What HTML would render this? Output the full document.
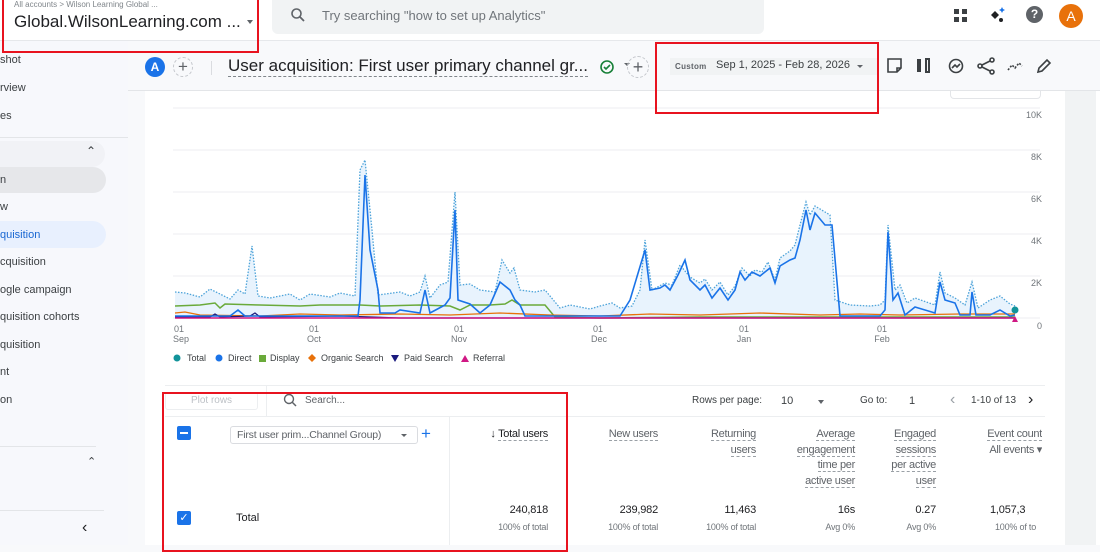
<!DOCTYPE html>
<html><head><meta charset="utf-8"><style>
*{box-sizing:border-box;margin:0;padding:0}
body{width:1100px;height:545px;overflow:hidden;background:#f8f9fb;font-family:"Liberation Sans",sans-serif;color:#3c4043;position:relative}
.a{position:absolute}
.top{left:0;top:0;width:1100px;height:41px;background:#fff;border-bottom:1px solid #e6e8eb}
.sb{left:0;top:41px;width:128px;height:504px;background:#f7f8fc}
.sb div{position:absolute;left:0;font-size:11px;color:#3c4043}
.card{left:145px;top:91px;width:920px;height:454px;background:#fff}
.red{position:absolute;border:2px solid #e8131f}
.th{position:absolute;font-size:11px;color:#5f6368;text-align:right;line-height:15.5px;letter-spacing:-.3px}
.th span{border-bottom:1px dashed #9aa0a6}
.num{position:absolute;font-size:11px;color:#202124;text-align:right;letter-spacing:-.2px}
.sub{position:absolute;font-size:9px;color:#70757a;text-align:right;letter-spacing:-.2px}
.ic{position:absolute;top:56px}
</style></head><body>
<div class="a top"></div>
<div class="a" style="left:14px;top:0;font-size:8px;color:#80868b">All accounts &gt; Wilson Learning Global ...</div>
<div class="a" style="left:14px;top:12px;font-size:17px;color:#202124">Global.WilsonLearning.com ...</div>
<div class="a" style="left:247px;top:20px;width:0;height:0;border-left:3px solid transparent;border-right:3px solid transparent;border-top:4px solid #5f6368"></div>
<div class="a" style="left:272px;top:0;width:492px;height:34px;background:#f1f3f4;border-radius:0 0 6px 6px"></div>
<svg class="a" style="left:290px;top:7px" width="16" height="16" viewBox="0 0 16 16"><circle cx="6.5" cy="6.5" r="4.5" fill="none" stroke="#5f6368" stroke-width="1.6"/><path d="M10 10l4 4" stroke="#5f6368" stroke-width="1.8"/></svg>
<div class="a" style="left:322px;top:8px;font-size:13px;color:#70757a">Try searching "how to set up Analytics"</div>
<svg class="a" style="left:953px;top:8px" width="15" height="15"><rect x="1" y="1" width="5" height="5" fill="#3c4043"/><rect x="9" y="1" width="5" height="5" fill="#3c4043"/><rect x="1" y="9" width="5" height="5" fill="#3c4043"/><rect x="9" y="9" width="5" height="5" fill="#3c4043"/></svg>
<svg class="a" style="left:988px;top:6px" width="20" height="18"><path d="M7 5l4 4-4 4-4-4z" fill="#202124"/><path d="M14 1l1 2 2 1-2 1-1 2-1-2-2-1 2-1z" fill="#1a73e8"/><circle cx="13" cy="14" r="2" fill="#202124"/></svg>
<div class="a" style="left:1026px;top:6px;width:17px;height:17px;border-radius:50%;background:#5f6368;color:#fff;font-size:12px;font-weight:bold;text-align:center;line-height:17px">?</div>
<div class="a" style="left:1059px;top:4px;width:24px;height:24px;border-radius:50%;background:#e8710a;color:#fff;font-size:14px;text-align:center;line-height:24px">A</div>

<div class="a sb">
<div style="top:13px">shot</div><div style="top:41px">rview</div><div style="top:69px">es</div>
<div style="top:96px;width:128px;height:1px;background:#e3e5e8"></div>
<div style="top:100px;width:105px;height:26px;background:#f1f2f6;border-radius:0 13px 13px 0"></div>
<div style="top:103px;left:86px;font-size:12px">&#8963;</div>
<div style="top:126px;width:106px;height:26px;background:#e6e7ea;border-radius:0 13px 13px 0"></div>
<div style="top:133px">n</div>
<div style="top:160px">w</div>
<div style="top:180px;width:106px;height:27px;background:#e8f0fe;border-radius:0 14px 14px 0"></div>
<div style="top:188px;color:#1967d2">quisition</div>
<div style="top:215px">cquisition</div>
<div style="top:243px">ogle campaign</div>
<div style="top:270px">quisition cohorts</div>
<div style="top:298px">quisition</div>
<div style="top:325px">nt</div>
<div style="top:353px">on</div>
<div style="top:405px;width:96px;height:1px;background:#e3e5e8"></div>
<div style="top:414px;left:87px;font-size:11px">&#8963;</div>
<div style="top:469px;width:104px;height:1px;background:#e3e5e8"></div>
<div style="top:478px;left:82px;font-size:16px;color:#202124">&#8249;</div>
</div>

<div class="a" style="left:128px;top:90px;width:972px;height:1px;background:#e3e5e8"></div>
<div class="a" style="left:145px;top:57px;width:20px;height:20px;border-radius:50%;background:#1a73e8;color:#fff;font-size:12px;font-weight:bold;text-align:center;line-height:20px">A</div>
<div class="a" style="left:173px;top:57px;width:20px;height:20px;border-radius:50%;border:1px dashed #c4c7cc;color:#5f6368;font-size:17px;text-align:center;line-height:18px">+</div>
<div class="a" style="left:211px;top:61px;width:1px;height:14px;background:#dadce0"></div>
<div class="a" style="left:228px;top:55px;font-size:17px;color:#202124;border-bottom:1px dashed #80868b;line-height:21px">User acquisition: First user primary channel gr...</div>
<svg class="a" style="left:599px;top:59px" width="16" height="16"><circle cx="8" cy="8" r="6" fill="none" stroke="#188038" stroke-width="1.6"/><path d="M5 8l2 2 4-4" fill="none" stroke="#188038" stroke-width="1.6"/></svg>
<div class="a" style="left:624px;top:63px;width:0;height:0;border-left:3px solid transparent;border-right:3px solid transparent;border-top:3px solid #5f6368"></div>
<div class="a" style="left:627px;top:56px;width:22px;height:22px;border-radius:50%;border:1px dashed #c4c7cc;color:#5f6368;font-size:18px;text-align:center;line-height:20px">+</div>
<div class="a" style="left:670px;top:58px;width:208px;height:17px;background:#f1f3f4"></div>
<div class="a" style="left:675px;top:62px;font-size:8px;color:#5f6368;font-weight:bold;letter-spacing:.3px">Custom</div>
<div class="a" style="left:716px;top:59px;font-size:11px;color:#3c4043">Sep 1, 2025 - Feb 28, 2026</div>
<div class="a" style="left:857px;top:65px;width:0;height:0;border-left:3px solid transparent;border-right:3px solid transparent;border-top:3px solid #5f6368"></div>
<svg class="ic" style="left:886px" width="170" height="20" fill="none" stroke="#3c4043" stroke-width="1.6">
<path d="M2 3h13v9l-4 4H2z M11 16v-4h4"/>
<path d="M32 3v13 M34 3v13 M40 3h3v13h-3z" stroke-width="2"/>
<circle cx="70" cy="10" r="6.5"/><path d="M66 12l3-3 2 2 3-3"/>
<circle cx="106" cy="4" r="2"/><circle cx="94" cy="10" r="2"/><circle cx="106" cy="16" r="2"/><path d="M104 5l-8 4M96 11l8 4"/>
<path d="M122 14l4-5 3 3 4-5 3 3" stroke-dasharray="2 1.5"/>
<path d="M152 16l1-4 8-8 3 3-8 8z"/>
</svg>

<div class="a card"></div>
<div class="a" style="left:950px;top:90px;width:91px;height:9px;border:1px solid #e3e5e8;border-top:none;border-radius:0 0 4px 4px"></div>
<div class="a" style="left:1065px;top:91px;width:35px;height:454px;background:#f1f3f4"></div>
<div class="a" style="left:1096px;top:91px;width:4px;height:454px;background:#fff"></div>

<svg class="a" style="left:0;top:0" width="1100" height="545">
<g stroke="#eceef0" stroke-width="1">
<path d="M173 108H1040M173 150H1040M173 192H1040M173 234H1040M173 276H1040M173 318H1040"/>
</g>
<g font-family="Liberation Sans" font-size="9" fill="#70757a" text-anchor="end">
<text x="1042" y="118">10K</text><text x="1042" y="160">8K</text><text x="1042" y="202">6K</text><text x="1042" y="244">4K</text><text x="1042" y="286">2K</text><text x="1042" y="329">0</text>
</g>
<g font-family="Liberation Sans" font-size="9" fill="#70757a" text-anchor="middle">
<text x="179" y="332">01</text><text x="181" y="342">Sep</text>
<text x="314" y="332">01</text><text x="314" y="342">Oct</text>
<text x="459" y="332">01</text><text x="459" y="342">Nov</text>
<text x="598" y="332">01</text><text x="599" y="342">Dec</text>
<text x="744" y="332">01</text><text x="744" y="342">Jan</text>
<text x="882" y="332">01</text><text x="882" y="342">Feb</text>
</g>
<polygon fill="#e8f3fd" points="175,318 175,292 185,293 200,297 210,289 222,295 230,299 238,290 245,294 252,246 258,296 270,298 290,294 300,300 310,294 330,297 340,293 355,296 360,170 365,160 372,230 378,295 400,292 410,296 420,292 425,276 430,298 440,285 448,282 455,192 460,285 470,284 480,290 495,292 502,260 510,273 514,268 520,290 535,292 545,290 550,296 560,308 570,305 590,309 600,306 612,303 620,308 632,306 640,290 645,240 652,290 665,283 672,285 680,265 690,277 700,283 705,279 712,290 720,282 728,295 735,286 742,268 750,276 755,270 762,272 768,262 775,280 780,258 790,251 795,245 800,225 806,202 810,215 815,206 825,212 830,215 835,300 850,305 870,306 880,305 885,300 888,225 895,290 900,285 907,303 915,298 935,305 940,272 945,293 955,298 965,305 972,282 978,308 990,300 1000,296 1010,304 1015,318"/>
<polyline fill="none" stroke="#4da3d9" stroke-width="1.3" stroke-dasharray="1.5 1.5" points="175,292 185,293 200,297 210,289 222,295 230,299 238,290 245,294 252,246 258,296 270,298 290,294 300,300 310,294 330,297 340,293 355,296 360,170 365,160 372,230 378,295 400,292 410,296 420,292 425,276 430,298 440,285 448,282 455,192 460,285 470,284 480,290 495,292 502,260 510,273 514,268 520,290 535,292 545,290 550,296 560,308 570,305 590,309 600,306 612,303 620,308 632,306 640,290 645,240 652,290 665,283 672,285 680,265 690,277 700,283 705,279 712,290 720,282 728,295 735,286 742,268 750,276 755,270 762,272 768,262 775,280 780,258 790,251 795,245 800,225 806,202 810,215 815,206 825,212 830,215 835,300 850,305 870,306 880,305 885,300 888,225 895,290 900,285 907,303 915,298 935,305 940,272 945,293 955,298 965,305 972,282 978,308 990,300 1000,296 1010,304 1015,306"/>
<polyline fill="none" stroke="#6aaa3a" stroke-width="1.5" points="175,306 200,305 215,303 220,308 225,304 260,305 300,306 320,305 360,305 380,306 420,305 450,306 460,310 470,305 490,305 505,304 512,300 520,305 545,305 555,317 600,318 700,317 760,317 1015,317"/>
<polyline fill="none" stroke="#e8710a" stroke-width="1.3" points="175,313 185,312 200,315 260,316 300,314 340,315 400,314 450,315 500,313 550,315 600,316 650,314 700,315 760,313 820,315 860,314 900,315 960,314 1015,314"/>
<polyline fill="none" stroke="#1a1a7e" stroke-width="1.2" points="175,317 210,317 215,314 220,317 250,316 255,313 260,317 340,316 400,318 600,318 1015,318"/>
<polyline fill="none" stroke="#1a73e8" stroke-width="1.6" points="175,316 230,316 238,310 245,316 290,316 350,316 358,316 360,300 365,175 370,250 378,290 380,313 395,313 400,310 420,313 425,290 430,313 445,305 450,298 455,210 458,300 470,304 480,313 490,305 500,282 510,290 515,300 520,305 525,316 620,316 630,300 645,250 650,290 660,288 665,285 670,290 678,275 685,260 690,280 700,290 705,285 712,298 720,288 728,300 735,290 740,272 745,280 752,272 760,276 770,268 775,283 780,266 790,260 795,258 800,240 806,210 810,230 815,213 825,225 832,225 840,316 880,316 885,310 888,232 893,300 898,293 905,315 915,307 935,313 940,282 945,300 955,303 960,315 970,315 972,292 976,315 990,315 1000,310 1010,316 1015,315"/>
<polyline fill="none" stroke="#d01884" stroke-width="1.5" points="175,318 1015,318"/>
<circle cx="1015" cy="310" r="3.5" fill="#12939a"/><path d="M1012 322l3-6 3 6z" fill="#d01884"/>
<g font-family="Liberation Sans" font-size="9" fill="#3c4043">
<circle cx="177" cy="358" r="3.5" fill="#12939a"/><text x="187" y="361">Total</text>
<circle cx="219" cy="358" r="3.5" fill="#1a73e8"/><text x="228" y="361">Direct</text>
<rect x="259" y="355" width="7" height="7" fill="#6aaa3a"/><text x="270" y="361">Display</text>
<path d="M312 354l4 4-4 4-4-4z" fill="#e8710a"/><text x="321" y="361">Organic Search</text>
<path d="M391 355h8l-4 7z" fill="#1a1a7e"/><text x="404" y="361">Paid Search</text>
<path d="M465 355l4 7h-8z" fill="#d01884"/><text x="473" y="361">Referral</text>
</g>
</svg>

<div class="a" style="left:165px;top:385px;width:880px;height:1px;background:#eceef0"></div>
<div class="a" style="left:165px;top:416px;width:880px;height:1px;background:#eceef0"></div>
<div class="a" style="left:165px;top:392px;width:93px;height:18px;border:1px solid #eceef0;border-radius:3px;font-size:10px;color:#bdc1c6;text-align:center;line-height:16px">Plot rows</div>
<div class="a" style="left:266px;top:386px;width:1px;height:30px;background:#eceef0"></div>
<svg class="a" style="left:283px;top:393px" width="14" height="14"><circle cx="6" cy="6" r="4.5" fill="none" stroke="#5f6368" stroke-width="1.4"/><path d="M9 9l4 4" stroke="#5f6368" stroke-width="1.5"/></svg>
<div class="a" style="left:305px;top:395px;font-size:10px;color:#5f6368">Search...</div>
<div class="a" style="left:692px;top:395px;font-size:10px;color:#3c4043">Rows per page:</div>
<div class="a" style="left:781px;top:395px;font-size:11px;color:#3c4043">10</div>
<div class="a" style="left:818px;top:400px;border-left:3px solid transparent;border-right:3px solid transparent;border-top:4px solid #5f6368"></div>
<div class="a" style="left:860px;top:395px;font-size:10px;color:#3c4043">Go to:</div>
<div class="a" style="left:909px;top:395px;font-size:11px;color:#3c4043">1</div>
<div class="a" style="left:950px;top:391px;font-size:16px;color:#9aa0a6">&#8249;</div>
<div class="a" style="left:971px;top:395px;font-size:10px;color:#3c4043">1-10 of 13</div>
<div class="a" style="left:1028px;top:391px;font-size:16px;color:#202124">&#8250;</div>

<div class="a" style="left:449px;top:416px;width:1px;height:129px;background:#eceef0"></div>
<div class="a" style="left:177px;top:426px;width:14px;height:14px;background:#1a73e8;border-radius:2px"><div style="margin:6px 3px;height:2px;background:#fff"></div></div>
<div class="a" style="left:230px;top:426px;width:188px;height:18px;border:1px solid #dadce0;border-radius:3px;font-size:10.5px;color:#5f6368;padding-left:6px;line-height:16px;letter-spacing:-.2px">First user prim...Channel Group)</div>
<div class="a" style="left:401px;top:434px;border-left:3px solid transparent;border-right:3px solid transparent;border-top:3px solid #5f6368"></div>
<div class="a" style="left:421px;top:424px;font-size:17px;color:#1a73e8">+</div>
<div class="th" style="left:460px;width:88px;top:427px;color:#202124">&#8595; <span>Total users</span></div>
<div class="th" style="left:560px;width:98px;top:427px"><span>New users</span></div>
<div class="th" style="left:680px;width:76px;top:427px"><span>Returning</span><br><span>users</span></div>
<div class="th" style="left:770px;width:85px;top:427px"><span>Average</span><br><span>engagement</span><br><span>time per</span><br><span>active user</span></div>
<div class="th" style="left:870px;width:66px;top:427px"><span>Engaged</span><br><span>sessions</span><br><span>per active</span><br><span>user</span></div>
<div class="th" style="left:950px;width:92px;top:427px;white-space:nowrap;overflow:hidden"><span>Event count</span><br>All events &#9662;</div>
<div class="a" style="left:177px;top:511px;width:14px;height:14px;background:#1a73e8;border-radius:2px;color:#fff;font-size:11px;text-align:center;line-height:14px">&#10003;</div>
<div class="a" style="left:236px;top:512px;font-size:11px;color:#202124">Total</div>
<div class="num" style="left:460px;width:88px;top:504px">240,818</div><div class="sub" style="left:460px;width:88px;top:522px">100% of total</div>
<div class="num" style="left:560px;width:98px;top:504px">239,982</div><div class="sub" style="left:560px;width:98px;top:522px">100% of total</div>
<div class="num" style="left:680px;width:76px;top:504px">11,463</div><div class="sub" style="left:680px;width:76px;top:522px">100% of total</div>
<div class="num" style="left:770px;width:85px;top:504px">16s</div><div class="sub" style="left:770px;width:85px;top:522px">Avg 0%</div>
<div class="num" style="left:870px;width:66px;top:504px">0.27</div><div class="sub" style="left:870px;width:66px;top:522px">Avg 0%</div>
<div class="num" style="left:990px;width:52px;top:504px;text-align:left;overflow:hidden;white-space:nowrap">1,057,3</div><div class="sub" style="left:995px;width:47px;top:522px;text-align:left;overflow:hidden;white-space:nowrap">100% of to</div>

<div class="red" style="left:2px;top:-2px;width:257px;height:55px"></div>
<div class="red" style="left:655px;top:42px;width:224px;height:72px"></div>
<div class="red" style="left:162px;top:392px;width:406px;height:160px"></div>
</body></html>
